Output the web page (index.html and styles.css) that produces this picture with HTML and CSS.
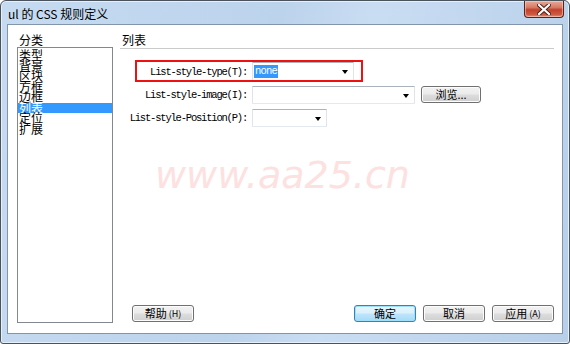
FILE: index.html
```html
<!DOCTYPE html>
<html lang="zh-CN">
<head>
<meta charset="utf-8">
<title>ul 的 CSS 规则定义</title>
<link rel="stylesheet" href="styles.css">
</head>
<body>
<div class="window">
  <div class="titlebar">
    <span class="title">ul 的 CSS 规则定义</span>
    <span class="close">
      <svg width="14" height="11" viewBox="0 0 14 11">
        <path d="M2 1 L12 10 M12 1 L2 10" stroke="#4a1a10" stroke-width="4" stroke-linecap="square"/>
        <path d="M2 1 L12 10 M12 1 L2 10" stroke="#ffffff" stroke-width="2.2" stroke-linecap="square"/>
      </svg>
    </span>
  </div>
  <div class="client">
    <div class="sidebar">
      <div class="group-label">分类</div>
      <ul class="category-list">
        <li>类型</li>
        <li>背景</li>
        <li>区块</li>
        <li>方框</li>
        <li>边框</li>
        <li class="selected">列表</li>
        <li>定位</li>
        <li>扩展</li>
      </ul>
    </div>
    <div class="main">
      <div class="section-title">列表</div>
      <div class="form">
        <div class="row">
          <span class="field-label">List-style-type(T):</span>
          <span class="combo combo-type"><span class="combo-value">none</span><span class="arrow"></span></span>
          <span class="annotation"></span>
        </div>
        <div class="row">
          <span class="field-label">List-style-image(I):</span>
          <span class="combo combo-image"><span class="arrow"></span></span>
          <button class="btn btn-browse">浏览...</button>
        </div>
        <div class="row">
          <span class="field-label">List-style-Position(P):</span>
          <span class="combo combo-position"><span class="arrow"></span></span>
        </div>
      </div>
      <div class="watermark">www.aa25.cn</div>
      <div class="actions">
        <button class="btn">帮助<span class="key">(H)</span></button>
        <div class="actions-right">
          <button class="btn btn-default">确定</button>
          <button class="btn">取消</button>
          <button class="btn">应用<span class="key">(A)</span></button>
        </div>
      </div>
    </div>
  </div>
</div>
</body>
</html>
```

FILE: styles.css
```css
* { box-sizing: border-box; }

html, body {
  margin: 0;
  padding: 0;
  background: #ffffff;
}

.window {
  width: 570px;
  height: 344px;
  display: flex;
  flex-direction: column;
  border: 1px solid #4a525c;
  border-radius: 6px 6px 3px 3px;
  background: linear-gradient(100deg, #c6dbf1 0%, #bcd3ec 45%, #c9ddf2 60%, #b7cfe9 100%);
  padding: 0 6px 9px 6px;
  box-shadow: inset 0 0 0 1px #e6f0fa;
  font-family: "Noto Sans CJK SC", "Noto Sans", sans-serif;
}

.titlebar {
  height: 23px;
  flex: none;
  display: flex;
  justify-content: space-between;
  align-items: flex-start;
}

.title {
  font-size: 12px;
  line-height: 16px;
  margin-top: 5px;
  margin-left: 1px;
  color: #000;
}

.close {
  width: 40px;
  height: 17px;
  margin-right: -1px;
  border: 1px solid #5a2319;
  border-top: none;
  border-radius: 0 0 4px 4px;
  background: linear-gradient(#e9a99b 0%, #d67b66 40%, #c4412a 55%, #cf5b43 85%, #e2937c 100%);
  display: flex;
  align-items: center;
  justify-content: center;
  box-shadow: inset 0 0 0 1px rgba(255, 220, 210, 0.5);
}

.close svg { display: block; }

.client {
  flex: 1;
  display: flex;
  background: #ffffff;
  border: 1px solid #8395ab;
  padding: 7px 8px 0 9px;
}

.sidebar {
  width: 96px;
  flex: none;
  display: flex;
  flex-direction: column;
}

.group-label,
.section-title {
  font-size: 12px;
  line-height: 15px;
  height: 15px;
  color: #000;
}

.group-label { padding-left: 2px; }

.category-list {
  flex: 1;
  list-style: none;
  margin: 0 0 10px 0;
  padding: 2px 0 0 0;
  border: 1px solid #828790;
  font-size: 12px;
  line-height: 10.5px;
}

.category-list li {
  height: 10.5px;
  padding-left: 1px;
  color: #000;
}

.category-list li.selected {
  background: #3399ff;
  color: #ffffff;
}

.main {
  flex: 1;
  margin-left: 7px;
  display: flex;
  flex-direction: column;
}

.section-title {
  height: 17px;
  padding-left: 2px;
  border-bottom: 1px solid #cacaca;
}

.form {
  margin-top: 13px;
  display: flex;
  flex-direction: column;
  gap: 4px;
}

.row {
  position: relative;
  display: flex;
  align-items: center;
  height: 19px;
}

.field-label {
  width: 128px;
  flex: none;
  text-align: right;
  font-family: "Liberation Mono", monospace;
  font-size: 10.5px;
  letter-spacing: -1.2px;
  color: #000;
  padding-right: 1px;
}

.combo {
  position: relative;
  margin-left: 4px;
  height: 19px;
  display: flex;
  align-items: center;
  background: #ffffff;
  border: 1px solid;
  border-color: #abb3bd #dfe4ea #e3e9ef #dfe4ea;
  border-radius: 1px;
}

.combo-type { width: 102px; }
.combo-image { width: 163px; height: 18px; }
.combo-position { width: 75px; height: 18px; }

.combo-value {
  margin-left: 1px;
  height: 13px;
  line-height: 13px;
  padding: 0 1px;
  background: #3399ff;
  color: #ffffff;
  font-family: "Liberation Mono", monospace;
  font-size: 10.5px;
  letter-spacing: -0.8px;
}

.arrow {
  position: absolute;
  right: 5px;
  top: 7px;
  width: 0;
  height: 0;
  border-top: 4px solid #000;
  border-left: 3.5px solid transparent;
  border-right: 3.5px solid transparent;
}

.annotation {
  position: absolute;
  left: 15px;
  top: -2px;
  width: 228px;
  height: 22px;
  border: 2px solid #ee1111;
  pointer-events: none;
}

.btn {
  width: 62px;
  height: 17px;
  padding: 0;
  border: 1px solid #707070;
  border-radius: 3px;
  background: linear-gradient(#f2f2f2 0%, #ebebeb 48%, #dddddd 52%, #cfcfcf 100%);
  box-shadow: inset 0 0 0 1px #fcfcfc;
  font-family: "Noto Sans CJK SC", "Noto Sans", sans-serif;
  font-size: 11px;
  line-height: 15px;
  color: #000;
  display: flex;
  align-items: center;
  justify-content: center;
}

.btn .key {
  font-size: 9px;
  margin-left: 2px;
}

.btn-browse {
  width: 60px;
  margin-left: 6px;
}

.btn-default {
  border-color: #3c7fb1;
  box-shadow: inset 0 0 0 1px #9ce0fb;
  background: linear-gradient(#eaf6fd 0%, #d9f0fc 48%, #bee6fd 52%, #a7d9f5 100%);
}

.watermark {
  margin-top: 26px;
  margin-left: 35px;
  font-family: "DejaVu Sans", sans-serif;
  font-style: italic;
  font-size: 38px;
  line-height: 44px;
  color: #fde1e1;
}

.actions {
  margin-top: auto;
  margin-bottom: 11px;
  padding-left: 12px;
  display: flex;
  justify-content: space-between;
}

.actions-right {
  display: flex;
  gap: 7px;
}
```
